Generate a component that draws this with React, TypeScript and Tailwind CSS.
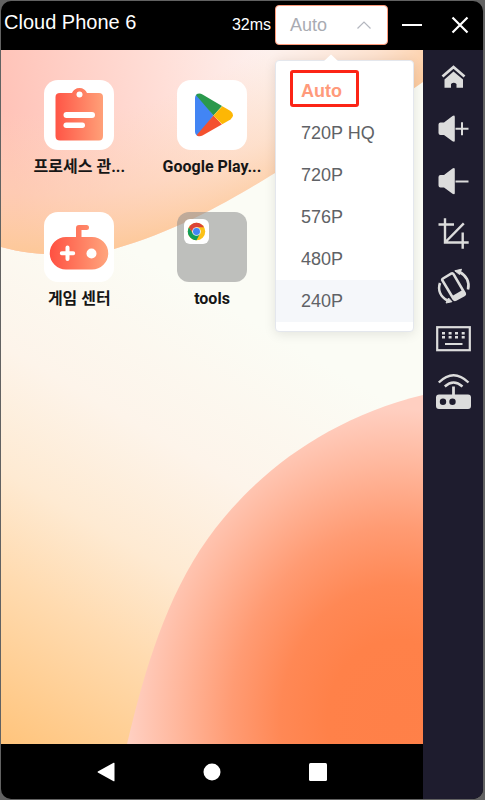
import { useState } from 'react';
import type { ReactNode } from 'react';

const qualities = ['Auto', '720P HQ', '720P', '576P', '480P', '240P'];

function Wallpaper() {
  return (
    <svg
      className="absolute inset-0 h-full w-full"
      viewBox="0 0 422 694"
      preserveAspectRatio="none"
      aria-hidden="true"
    >
      <defs>
        <linearGradient id="base" gradientUnits="userSpaceOnUse" x1="0" y1="694" x2="250" y2="270">
          <stop offset="0" stopColor="#ffc47c" />
          <stop offset="0.3" stopColor="#ffdbb0" />
          <stop offset="0.48" stopColor="#feead2" />
          <stop offset="0.7" stopColor="#fdf4ea" />
          <stop offset="1" stopColor="#fbfcf5" />
        </linearGradient>
        <linearGradient id="top" gradientUnits="userSpaceOnUse" x1="0" y1="40" x2="270" y2="0">
          <stop offset="0" stopColor="#ffc3b8" />
          <stop offset="0.6" stopColor="#ffdfd8" />
          <stop offset="1" stopColor="#fdf2f0" />
        </linearGradient>
        <radialGradient id="topEdge" gradientUnits="userSpaceOnUse" cx="50" cy="-300" r="505">
          <stop offset="0.72" stopColor="#fdd8b8" stopOpacity="0" />
          <stop offset="0.88" stopColor="#fdd2ae" stopOpacity="0.5" />
          <stop offset="1" stopColor="#fdc898" />
        </radialGradient>
        <radialGradient
          id="sun"
          gradientUnits="userSpaceOnUse"
          cx="395"
          cy="573"
          r="275"
          gradientTransform="scale(1 1.17)"
        >
          <stop offset="0" stopColor="#ff8048" />
          <stop offset="0.25" stopColor="#ff8149" />
          <stop offset="0.42" stopColor="#ff8855" />
          <stop offset="0.6" stopColor="#ff9b73" />
          <stop offset="0.8" stopColor="#ffb89e" />
          <stop offset="0.97" stopColor="#ffcfc1" />
        </radialGradient>
      </defs>
      <rect width="422" height="694" fill="url(#base)" />
      <path d="M0 0H422V32C380 62 330 92 274 123C235 147 180 180 113 199C80 205 40 208 0 197Z" fill="url(#top)" />
      <path d="M0 0H422V32C380 62 330 92 274 123C235 147 180 180 113 199C80 205 40 208 0 197Z" fill="url(#topEdge)" />
      <path d="M126 694C140 635 160 560 199 500C245 430 320 370 422 345V694Z" fill="url(#sun)" />
    </svg>
  );
}

function ClipboardIcon() {
  return (
    <svg viewBox="0 1 70 70" className="h-full w-full" aria-hidden="true">
      <defs>
        <linearGradient id="clip" x1="0" y1="0" x2="1" y2="0">
          <stop offset="0" stopColor="#ff5546" />
          <stop offset="1" stopColor="#ffa078" />
        </linearGradient>
      </defs>
      <path
        d="M16 14H28C29 11 32 9 35.500 9S42 11 43 14H55Q59 14 59 18V57Q59 61.500 55 61.500H16Q11.500 61.500 11.500 57V18Q11.500 14 16 14Z"
        fill="url(#clip)"
      />
      <circle cx="35.500" cy="15.500" r="3" fill="#fff" />
      <rect x="19.500" y="33" width="31.500" height="6" rx="3" fill="#fff" />
      <rect x="19.500" y="43.500" width="21.500" height="5.500" rx="2.700" fill="#fff" />
    </svg>
  );
}

function PlayIcon() {
  return (
    <svg viewBox="0 0 70 70" className="h-full w-full" aria-hidden="true">
      <defs>
        <clipPath id="play">
          <path d="M18 18C18 14 22 12.500 25.500 14.500L53.500 31Q58.500 35 53.500 39.500L25.500 55.500C22 57.500 18 55.500 18 51.500Z" />
        </clipPath>
      </defs>
      <g clipPath="url(#play)">
        <path d="M18 10V61L36.500 35.500Z" fill="#4285f4" />
        <path d="M18 14V10H50L45 26L36.500 35.500Z" fill="#2a994c" />
        <path d="M18 57V62H50L45 44.500L36.500 35.500Z" fill="#f4512f" />
        <path d="M45.500 26L36.500 35.500L45.500 44.500L60 42V28Z" fill="#fdb705" />
      </g>
    </svg>
  );
}

function GameIcon() {
  return (
    <svg viewBox="0 0 70 70" className="h-full w-full" aria-hidden="true">
      <defs>
        <linearGradient id="game" gradientUnits="userSpaceOnUse" x1="6" y1="0" x2="64" y2="0">
          <stop offset="0" stopColor="#ff5142" />
          <stop offset="1" stopColor="#ffa57d" />
        </linearGradient>
      </defs>
      <path
        d="M32 25V16Q32 13 35 13H42.500Q45 13 45 15.500T42.500 18H37.500V25H48A16 16 0 0 1 48 57.500H22A16 16 0 0 1 22 25Z"
        fill="url(#game)"
      />
      <path d="M23.500 35.500V47M17.800 41.200H29.200" stroke="#fff" strokeWidth="4" strokeLinecap="round" />
      <circle cx="47.500" cy="41.500" r="5" fill="#fff" />
    </svg>
  );
}

function ChromeIcon() {
  return (
    <svg viewBox="0 0 48 48" className="h-[19px] w-[19px]" aria-hidden="true">
      <circle cx="24" cy="24" r="22" fill="#fbc116" />
      <path d="M4.950 13A22 22 0 0 0 24 46L33 29L15.300 29Z" fill="#109d58" />
      <path d="M4.950 13A22 22 0 0 1 43.050 13H24L15.300 29Z" fill="#db4437" />
      <circle cx="24" cy="24" r="11" fill="#f1f1f1" />
      <circle cx="24" cy="24" r="8.800" fill="#4285f4" />
    </svg>
  );
}

function AppTile({ label, folder, children }: { label: string; folder?: boolean; children: ReactNode }) {
  return (
    <button type="button" className="flex h-[132px] flex-col items-center gap-[5px]">
      <span
        className={
          folder
            ? 'flex h-[70px] w-[70px] items-start rounded-xl bg-[#8c8c8c]/55 p-[7px]'
            : 'h-[70px] w-[70px] overflow-hidden rounded-[14px] bg-white'
        }
      >
        {children}
      </span>
      <span className="font-['Roboto','Noto_Sans_CJK_KR',sans-serif] text-base leading-6 font-bold whitespace-nowrap text-[#161616]">
        {label}
      </span>
    </button>
  );
}

const sideIcons: { name: string; icon: ReactNode }[] = [
  {
    name: 'Home',
    icon: (
      <>
        <path d="M8.500 18.500L19.500 9L30.500 18.500" fill="none" stroke="currentColor" strokeWidth="2.800" />
        <path d="M19.500 13.500L29 21.500V29.700H22.500V26Q19.700 23.500 17 26V29.700H10.500V21.500Z" fill="currentColor" />
      </>
    ),
  },
  {
    name: 'Volume up',
    icon: (
      <>
        <path
          d="M6.500 12.500H10L18.500 6Q20.800 4.800 20.800 7V30.500Q20.800 32.500 18.500 31.300L10 25H6.500Q4.500 25 4.500 23V14.500Q4.500 12.500 6.500 12.500Z"
          fill="currentColor"
        />
        <path d="M21.500 18.700H34.500M28 12.200V25.200" stroke="currentColor" strokeWidth="2" />
      </>
    ),
  },
  {
    name: 'Volume down',
    icon: (
      <>
        <path
          d="M6.500 13H10L18.500 6.500Q20.800 5.300 20.800 7.500V31Q20.800 33 18.500 31.800L10 25.500H6.500Q4.500 25.500 4.500 23.500V15Q4.500 13 6.500 13Z"
          fill="currentColor"
        />
        <path d="M21.500 19.500H34.500" stroke="currentColor" strokeWidth="2" />
      </>
    ),
  },
  {
    name: 'Screenshot',
    icon: (
      <path
        d="M4.500 10.500H20M11 4.300V28.500H34.700M28.700 18.500V34.700M29.800 9.300L11 28.500"
        fill="none"
        stroke="currentColor"
        strokeWidth="2.400"
      />
    ),
  },
  {
    name: 'Rotate',
    icon: (
      <>
        <path
          d="M9 12.500L17.500 7.500Q18.800 7 19.500 8.200L30.600 27Q31.200 28.500 30 29.200L21.800 33.600Q20.400 34.200 19.600 33L8.400 14.500Q7.800 13.200 9 12.500Z"
          fill="none"
          stroke="currentColor"
          strokeWidth="2.600"
        />
        <path d="M17.800 30.300L28.500 24L31 28.500L20.800 34Z" fill="currentColor" />
        <path
          d="M6 17C3.500 24 6.500 30.500 13.500 34.500M34 23.500C36 16.500 32.500 9.500 25.500 6"
          fill="none"
          stroke="currentColor"
          strokeWidth="2.600"
        />
        <path d="M12 37L18 35.700L14.500 32ZM27.500 3.200L20.800 4.800L25.500 8.500Z" fill="currentColor" stroke="currentColor" strokeWidth="1" />
      </>
    ),
  },
  {
    name: 'Keyboard',
    icon: (
      <>
        <rect x="3.200" y="9.200" width="32.600" height="23" fill="none" stroke="currentColor" strokeWidth="2.200" />
        <path
          d="M8 15.300H11M14.600 15.300H17.600M21 15.300H24M27.700 15.300H30.700M8 19.300H11M14.600 19.300H17.600M21 19.300H24M27.700 19.300H30.700"
          stroke="currentColor"
          strokeWidth="2.400"
        />
        <path d="M11 26H28.500" stroke="currentColor" strokeWidth="2" />
      </>
    ),
  },
  {
    name: 'Network',
    icon: (
      <>
        <path
          fillRule="evenodd"
          d="M5 24.500H34Q37 24.500 37 27.500V36Q37 39 34 39H5Q2 39 2 36V27.500Q2 24.500 5 24.500ZM9 28.500A3.200 3.200 0 1 0 9 34.900A3.200 3.200 0 1 0 9 28.500ZM18.500 28.500A3.200 3.200 0 1 0 18.500 34.900A3.200 3.200 0 1 0 18.500 28.500Z"
          fill="currentColor"
        />
        <path d="M19.500 16.500V25" stroke="currentColor" strokeWidth="2.800" />
        <path
          d="M4.800 12.500Q19.500 -2 34.500 12.500M10.800 16.500Q19.500 8.500 28.500 16.500"
          fill="none"
          stroke="currentColor"
          strokeWidth="2.400"
        />
      </>
    ),
  },
];

export default function App() {
  const [open, setOpen] = useState(true);
  const [quality, setQuality] = useState('Auto');

  return (
    <div className="flex min-h-screen flex-col bg-[#626262] p-px pr-0.5 font-['Liberation_Sans',Arial,sans-serif]">
      <div className="flex flex-1 flex-col overflow-hidden rounded-[10px] bg-black">
        <header className="relative z-10 flex h-[49px] items-center pr-3 pb-px pl-[3px] text-white">
          <h1 className="flex-1 pb-1.5 text-xl leading-6">Cloud Phone 6</h1>
          <span className="mr-1 text-base leading-6">32ms</span>

          <div className="relative">
            <button
              type="button"
              aria-haspopup="listbox"
              aria-expanded={open}
              onClick={() => setOpen(!open)}
              className="flex h-10 w-[113px] items-center justify-between rounded border border-[#ff9a7b] bg-white pr-4 pl-3.5 text-lg text-[#a9abb2]"
            >
              {quality}
              <svg viewBox="0 0 14 8" className="h-2 w-3.5" fill="none" stroke="#b4b7bf" strokeWidth="1.200" aria-hidden="true">
                <path d="M0.500 7.500L7 1L13.500 7.500" />
              </svg>
            </button>

            {open && (
              <div className="absolute top-[55px] left-0 w-[139px] rounded border border-[#e4e7ed] bg-white py-[9px] shadow-[0_2px_12px_rgba(0,0,0,0.1)]">
                <svg viewBox="0 0 16 8" className="absolute -top-[7px] left-[47px] h-2 w-4" aria-hidden="true">
                  <path d="M0 8L8 0.500L16 8Z" fill="#fff" />
                </svg>
                <ul role="listbox" aria-label="Quality">
                  {qualities.map((q) => (
                    <li key={q} role="option" aria-selected={q === quality}>
                      <button
                        type="button"
                        onClick={() => {
                          setQuality(q);
                          setOpen(false);
                        }}
                        className={`h-[42px] w-full pl-[25px] text-left text-lg ${
                          q === quality ? 'font-bold text-[#ff9a7b]' : 'text-[#606266]'
                        } ${q === '240P' ? 'bg-[#f5f7fa]' : ''}`}
                      >
                        {q}
                      </button>
                    </li>
                  ))}
                </ul>
                <span className="pointer-events-none absolute top-[9px] left-3.5 h-[37px] w-[69px] rounded-[3px] border-3 border-[#fc2416]" />
              </div>
            )}
          </div>

          <button type="button" aria-label="Minimize" className="ml-[13px]">
            <svg viewBox="0 0 22 22" className="h-[22px] w-[22px]" stroke="#fff" strokeWidth="2.200">
              <path d="M1 11H21" />
            </svg>
          </button>
          <button type="button" aria-label="Close" className="ml-[26px]">
            <svg viewBox="0 0 22 22" className="h-[22px] w-[22px]" stroke="#fff" strokeWidth="2.200">
              <path d="M3.500 3.500L18.500 18.500M18.500 3.500L3.500 18.500" />
            </svg>
          </button>
        </header>

        <div className="flex flex-1">
          <main className="flex flex-1 flex-col">
            <div className="relative flex-1 overflow-hidden">
              <Wallpaper />
              <div className="relative grid grid-cols-3 px-3 pt-[30px]">
                <AppTile label="프로세스 관...">
                  <ClipboardIcon />
                </AppTile>
                <AppTile label="Google Play...">
                  <PlayIcon />
                </AppTile>
                <span />
                <AppTile label="게임 센터">
                  <GameIcon />
                </AppTile>
                <AppTile label="tools" folder>
                  <span className="flex h-[25px] w-[25px] items-center justify-center rounded-md bg-white">
                    <ChromeIcon />
                  </span>
                </AppTile>
              </div>
            </div>

            <nav className="flex h-[55px] items-center justify-center gap-[88px]">
              <button type="button" aria-label="Back">
                <svg viewBox="0 0 18 20" className="h-5 w-[18px]" fill="#fff">
                  <path d="M17.500 1.300V18.700Q17.500 19.700 16.600 19.200L0.800 10.500Q0.300 10 0.800 9.500L16.600 0.800Q17.500 0.300 17.500 1.300Z" />
                </svg>
              </button>
              <button type="button" aria-label="Home screen">
                <svg viewBox="0 0 18 18" className="h-[18px] w-[18px]" fill="#fff">
                  <circle cx="9" cy="9" r="8.500" />
                </svg>
              </button>
              <button type="button" aria-label="Recent apps">
                <svg viewBox="0 0 18 18" className="h-[18px] w-[18px]" fill="#fff">
                  <rect width="18" height="18" rx="1.500" />
                </svg>
              </button>
            </nav>
          </main>

          <aside className="flex w-[60px] flex-col bg-[#1e1c2e] pt-0.5 text-[#dcdcdc]">
            {sideIcons.map((item) => (
              <button
                key={item.name}
                type="button"
                aria-label={item.name}
                className="flex h-[52px] items-center justify-center"
              >
                <svg viewBox="-1 0 40 40" className="h-10 w-10">
                  {item.icon}
                </svg>
              </button>
            ))}
          </aside>
        </div>
      </div>
    </div>
  );
}
